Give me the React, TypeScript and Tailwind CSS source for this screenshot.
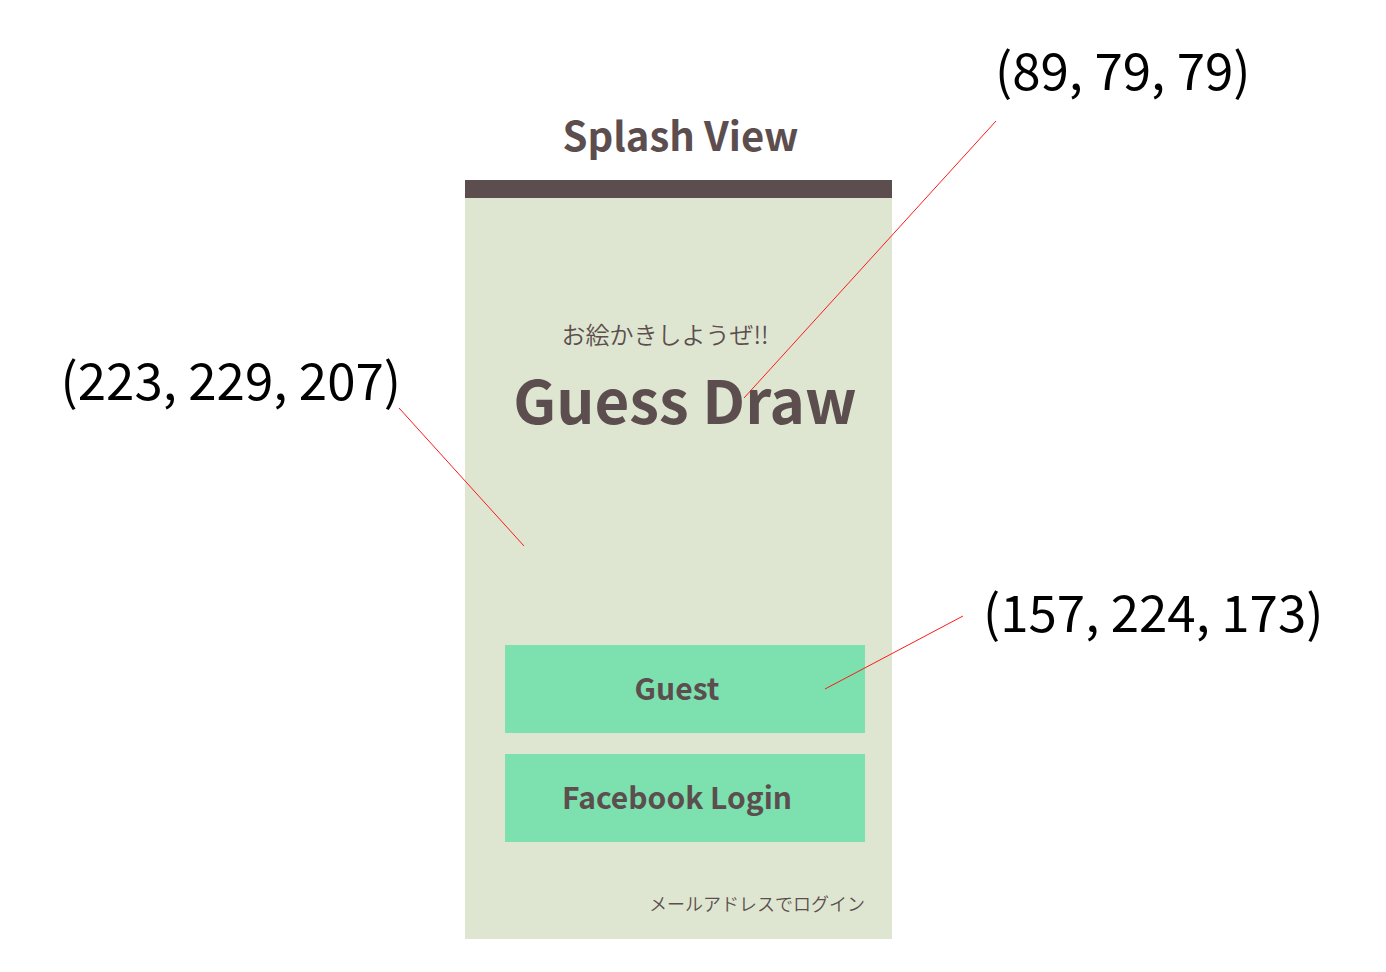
type Line = { x1: number; y1: number; x2: number; y2: number };

const leaders: Line[] = [
  { x1: -66, y1: 228, x2: 59, y2: 366 },
  { x1: 531, y1: -59, x2: 279, y2: 218 },
  { x1: 498, y1: 436, x2: 360, y2: 509 },
];

function ColorNote({ value }: { value: string }) {
  return <p className="whitespace-nowrap text-[51px] leading-[60px] text-black">{value}</p>;
}

function LoginButton({ label }: { label: string }) {
  return (
    <button type="button" className="h-[88px] w-full bg-[#7ce1ae] pr-4 pb-1 text-[30px] leading-10 font-bold">
      {label}
    </button>
  );
}

export default function App() {
  return (
    <main className="grid min-h-screen grid-cols-[1fr_minmax(0,427px)_1fr] overflow-hidden bg-white pr-[29px] font-['Noto_Sans_CJK_JP',sans-serif] text-[#5c4e4e]">
      <aside className="flex justify-end pt-[348px] pr-16">
        <ColorNote value="(223, 229, 207)" />
      </aside>

      <section className="pt-[104px] pb-8">
        <h1 className="pl-1 text-center text-[40px] leading-[60px] font-bold">Splash View</h1>
        <div className="relative mt-4 border-t-[18px] border-[#5c4e4e] bg-[#dee6d1] pr-[27px] pb-[22px] pl-10">
          <p className="pt-[118px] pr-10 text-center text-[24px] leading-9 font-[350]">お絵かきしようぜ!!</p>
          <h2 className="mt-1.5 text-center text-[60px] leading-[80px] font-bold whitespace-nowrap">Guess Draw</h2>
          <div className="mt-[207px] flex flex-col gap-[21px]">
            <LoginButton label="Guest" />
            <LoginButton label="Facebook Login" />
          </div>
          <div className="mt-[47px] text-right">
            <a href="#mail" className="text-[18px] leading-7 font-[350]">
              メールアドレスでログイン
            </a>
          </div>
          <svg
            className="pointer-events-none absolute -top-[18px] left-0 h-full w-full overflow-visible"
            aria-hidden="true"
          >
            {leaders.map((l) => (
              <line key={l.x1} {...l} stroke="#ff1a1a" strokeWidth="1" />
            ))}
          </svg>
        </div>
      </section>

      <aside className="flex flex-col gap-[482px] pt-[38px] pl-[91px]">
        <div className="pl-3">
          <ColorNote value="(89, 79, 79)" />
        </div>
        <ColorNote value="(157, 224, 173)" />
      </aside>
    </main>
  );
}
